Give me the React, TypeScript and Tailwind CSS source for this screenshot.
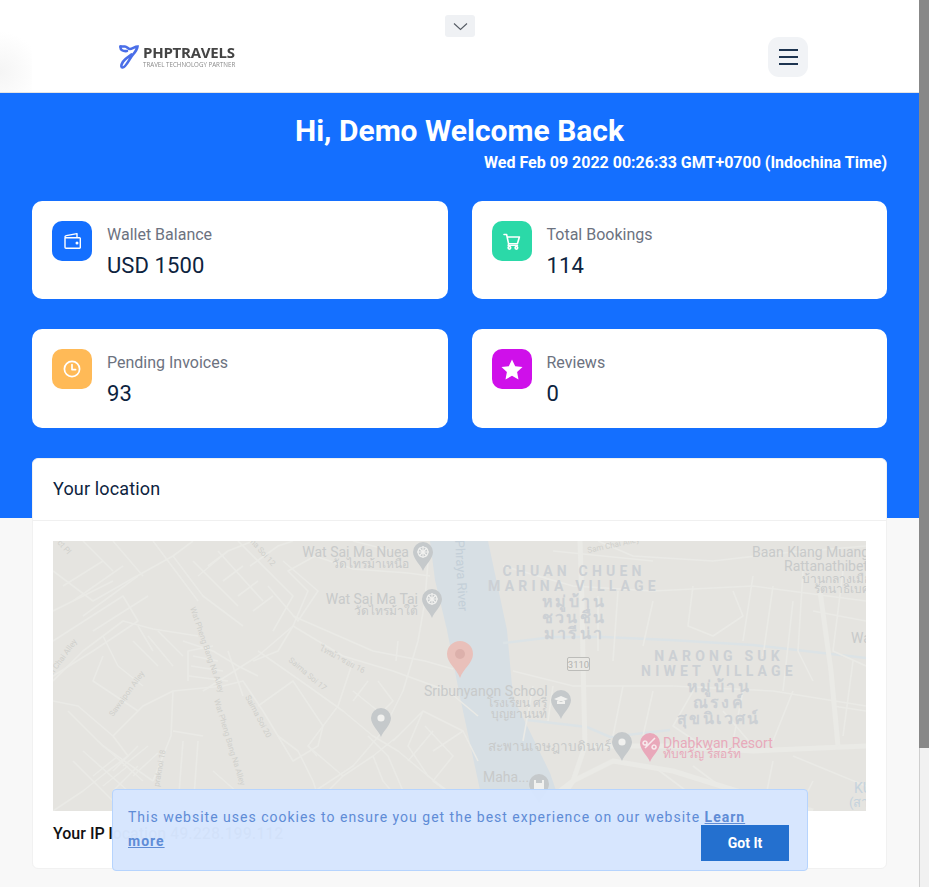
type Label = { t: string; x: number; y: number; s?: number; a?: "start" | "middle" | "end"; c?: string; w?: number; ls?: number; r?: number };

const roads: string[] = [
  "M0 30 L40 60 L75 40 L120 15 L140 0",
  "M0 70 L60 40 M0 100 L70 55 L85 80 L40 110 L0 135",
  "M10 45 L50 20 M20 60 L70 25 M30 75 L85 35 M40 90 L95 55",
  "M30 0 L60 30 M60 0 L90 35 M100 0 L130 40 L145 60",
  "M120 15 L150 55 L170 70 L190 85 M145 35 L175 10 L200 0",
  "M140 20 L185 65 M165 10 L210 60 M185 0 L240 55 L220 90",
  "M155 25 L175 10 M170 40 L190 25 M185 55 L205 40 M200 70 L220 55",
  "M197 25 L225 5 L240 0 M215 45 L245 80 L265 50 L230 20",
  "M340 10 L300 0 M262 15 L300 28 L355 32 L377 35 M262 15 L235 30 L255 50 L240 85 L205 115 L150 150",
  "M240 75 L320 110 L372 120 L400 128 M205 110 L255 145 L290 170 L320 195 L345 210 L375 235 L410 262",
  "M240 85 L290 115 L340 130 L395 150 L425 175",
  "M375 20 L372 60 L365 100 L350 150 L330 190 L300 225 L262 250 L230 270",
  "M345 100 L343 120 M300 120 L285 165 L270 185 L255 205 L264 215",
  "M0 140 L30 110 L50 95 L70 80 L100 88 L145 95 M50 95 L65 125 L90 145 M50 115 L40 140 L85 170",
  "M85 85 L100 110 M95 95 L120 125 M105 90 L130 115 M80 100 L105 125",
  "M0 160 L25 165 L60 195 L75 215 L55 230 L30 250 L0 270",
  "M15 170 L50 205 L100 240 M60 195 L90 165 L120 150 L170 145 L190 140 L210 170 L225 195 L245 210 L260 240 L270 270",
  "M120 150 L118 195 L110 215 L100 240 M120 190 L150 195 M130 100 L160 110 L185 125 L205 135",
  "M135 140 L135 110 L160 105 M175 110 L190 155 M200 120 L225 110 L240 85 M140 115 L165 120 M138 125 L170 130 M136 135 L175 140",
  "M205 165 L240 140 L270 185 L265 205 L240 220 L225 195",
  "M255 205 L290 235 L275 250 L290 270 M290 235 L320 215 L345 195 M320 215 L330 240 L355 270",
  "M300 150 L325 170 M300 160 L315 140 M325 140 L340 160 L330 170",
  "M315 195 L335 215 L350 250 M340 200 L370 170 L410 190 L425 220 M370 170 L355 205 L375 235",
  "M372 185 L400 215 L380 240 L410 262 M410 190 L380 210 M380 190 L355 220",
  "M545 0 L580 15 L660 20 L730 12 L813 5",
  "M500 10 L600 20 M450 25 L520 45 L600 50 L700 45 L813 60",
  "M545 55 L545 110 M565 50 L560 120 M600 60 L590 105 M640 45 L635 85 L660 95 L690 75 L680 50",
  "M700 35 L690 100 M720 45 L710 115 M740 60 L730 150 M750 30 L745 110 L760 140",
  "M460 130 L520 145 L620 145 L720 150 L813 165 M480 145 L470 200 M500 145 L495 180",
  "M570 145 L560 195 M600 150 L590 195 M640 150 L620 185 L650 205 M670 170 L700 205 M690 150 L680 200 M740 150 L720 200",
  "M800 120 L790 195 M813 170 L780 165 M760 70 L813 80 M790 30 L780 110 L813 125",
  "M600 225 L660 270 M640 225 L700 270 M720 220 L710 270 M740 215 L813 245 M760 240 L745 270",
  "M20 220 L60 260 M30 210 L75 250 M45 200 L90 240 M60 250 L85 225 M85 205 L60 230",
  "M70 225 L95 205 M80 235 L105 212 M40 235 L65 215 M50 245 L75 225",
  "M130 200 L125 265 M145 200 L140 270 M160 230 L200 265",
];

const mains: string[] = [
  "M527 0 L529 60 L530 120 L532 205 L520 240 L480 270",
  "M540 205 L620 205 L700 210 L813 205",
  "M767 50 L778 130 L785 205",
  "M500 270 L520 240 L560 220 L620 230 L700 255 L760 270",
];

const labels: Label[] = [
  { t: "Wat Sai Ma Nuea", x: 356, y: 16, s: 14, a: "end" },
  { t: "วัดไทรม้าเหนือ", x: 356, y: 27, s: 12, a: "end" },
  { t: "Wat Sai Ma Tai", x: 365, y: 63, s: 14, a: "end" },
  { t: "วัดไทรม้าใต้", x: 365, y: 74, s: 12, a: "end" },
  { t: "Sribunyanon School", x: 371, y: 155, s: 14 },
  { t: "โรงเรียน ศรี", x: 494, y: 166, s: 12, a: "end" },
  { t: "บุญยานนท์", x: 494, y: 177, s: 12, a: "end" },
  { t: "CHUAN CHUEN", x: 521, y: 35, s: 14, a: "middle", w: 700, ls: 4.2, c: "#ccd0d4" },
  { t: "MARINA VILLAGE", x: 521, y: 50, s: 14, a: "middle", w: 700, ls: 4.2, c: "#ccd0d4" },
  { t: "หมู่บ้าน", x: 521, y: 66, s: 16, a: "middle", w: 700, ls: 2.4, c: "#ccd0d4" },
  { t: "ชวนชื่น", x: 521, y: 82, s: 16, a: "middle", w: 700, ls: 2.4, c: "#ccd0d4" },
  { t: "มารีน่า", x: 521, y: 98, s: 16, a: "middle", w: 700, ls: 2.4, c: "#ccd0d4" },
  { t: "NARONG SUK", x: 666, y: 120, s: 14, a: "middle", w: 700, ls: 4.2, c: "#ccd0d4" },
  { t: "NIWET VILLAGE", x: 666, y: 135, s: 14, a: "middle", w: 700, ls: 4.2, c: "#ccd0d4" },
  { t: "หมู่บ้าน", x: 666, y: 151, s: 16, a: "middle", w: 700, ls: 2.4, c: "#ccd0d4" },
  { t: "ณรงค์", x: 666, y: 167, s: 16, a: "middle", w: 700, ls: 2.4, c: "#ccd0d4" },
  { t: "สุขนิเวศน์", x: 666, y: 183, s: 16, a: "middle", w: 700, ls: 2.4, c: "#ccd0d4" },
  { t: "Baan Klang Muang", x: 699, y: 16, s: 14 },
  { t: "Rattanathibet", x: 731, y: 30, s: 14 },
  { t: "บ้านกลางเมือง", x: 749, y: 42, s: 12 },
  { t: "รัตนาธิเบศร์", x: 761, y: 52, s: 12 },
  { t: "Wa", x: 798, y: 102, s: 14 },
  { t: "Dhabkwan Resort", x: 610, y: 207, s: 14, c: "#e8aabb" },
  { t: "ทับขวัญ รีสอร์ท", x: 610, y: 217, s: 12, c: "#e8aabb" },
  { t: "สะพานเจษฎาบดินทร์", x: 435, y: 210, s: 13.5 },
  { t: "Maha...", x: 430, y: 241, s: 14 },
  { t: "KU", x: 801, y: 252, s: 14, c: "#c5d3dd" },
  { t: "(สา", x: 796, y: 266, s: 13, c: "#c5d3dd" },
  { t: "Phraya River", x: 402, y: -1, s: 13, c: "#c4cfd8", r: 87 },
  { t: "Wat Pheng Bang Na Alley", x: 137, y: 67, s: 8, r: 71 },
  { t: "Wat Pheng Bang Na Alley", x: 161, y: 159, s: 8, r: 73 },
  { t: "Saima Soi 17", x: 235, y: 120, s: 8, r: 40 },
  { t: "ไทรม้า ซอย 16", x: 266, y: 109, s: 8, r: 28 },
  { t: "Sawaipon Alley", x: 60, y: 176, s: 8, r: -54 },
  { t: "Saima Soi 20", x: 192, y: 156, s: 8, r: 62 },
  { t: "n Chai Alley", x: 0, y: 134, s: 8, r: -54 },
  { t: "praknoi 18", x: 106, y: 246, s: 8, r: -80 },
  { t: "na Soi 12", x: 197, y: 1, s: 8, r: 48 },
  { t: "Sam Chai Alley", x: 535, y: 12, s: 8, r: -12 },
  { t: "ct Pl", x: 4, y: 2, s: 8, r: 48 },
];

const dropPin = (x: number, y: number, c: string, glyph: string) => (
  <g key={`${x}-${y}`}>
    <path d={`M${x} ${y + 18} C${x - 2} ${y + 12} ${x - 10} ${y + 6} ${x - 10} ${y - 1} A10 10 0 0 1 ${x + 10} ${y - 1} C${x + 10} ${y + 6} ${x + 2} ${y + 12} ${x} ${y + 18}Z`} fill={c} />
    {glyph === "dot" && <circle cx={x} cy={y - 1} r={3.6} fill="#f1f1ef" />}
    {glyph === "wheel" && (
      <g stroke="#f1f1ef" strokeWidth={1.2} fill="none">
        <circle cx={x} cy={y - 1} r={5} />
        <path d={`M${x - 6} ${y - 1}H${x + 6}M${x} ${y - 7}V${y + 5}M${x - 4} ${y - 5}L${x + 4} ${y + 3}M${x + 4} ${y - 5}L${x - 4} ${y + 3}`} />
      </g>
    )}
    {glyph === "cap" && <path d={`M${x - 7} ${y - 2}L${x} ${y - 5}L${x + 7} ${y - 2}L${x} ${y + 1}ZM${x - 4} ${y}V${y + 3}H${x + 4}V${y}Z`} fill="#f1f1ef" />}
    {glyph === "resort" && <path d={`M${x - 5} ${y + 4}L${x + 5} ${y - 6}M${x - 5} ${y - 3}a2 2 0 1 0 .1 0M${x + 4} ${y + 1}a2 2 0 1 0 .1 0`} stroke="#f7e9ec" strokeWidth={1.6} fill="none" />}
    {glyph === "temple" && <path d={`M${x - 5} ${y + 4}V${y - 5}H${x - 3}V${y - 2}H${x + 3}V${y - 5}H${x + 5}V${y + 4}Z`} fill="#f1f1ef" />}
  </g>
);

function MapArt() {
  return (
    <svg viewBox="0 0 813 270" className="block w-full h-[270px]" style={{ fontFamily: "Roboto, 'Noto Sans', 'DejaVu Sans', sans-serif" }}>
      <rect width="813" height="270" fill="#e5e4e0" />
      <path d="M377 0 L382 39 L394 89 L407 156 L427 249 L435 270 L510 270 L497 232 L460 156 L454 89 L435 0Z" fill="#d7dfe4" />
      <g fill="none" stroke="#dce3e6" strokeWidth={2.5}>
        <path d="M450 102 L500 96 L550 96 L617 99 L700 104 L813 117" />
        <path d="M474 179 L534 186 L557 196 L617 189" />
      </g>
      <g fill="none" stroke="#eaeae6" strokeWidth={5} strokeLinejoin="round">
        {mains.map((d) => <path key={d} d={d} />)}
      </g>
      <g fill="none" stroke="#eaeae6" strokeWidth={1.6} strokeLinejoin="round">
        {roads.map((d) => <path key={d} d={d} />)}
      </g>
      <g>
        <rect x="514.5" y="116.5" width="22" height="13" rx="1.5" fill="#e9e8e4" stroke="#bcbcb9" />
        <text x="525.5" y="127" textAnchor="middle" fontSize="9.5" fill="#b3b3b0">3110</text>
      </g>
      {labels.map((l) => (
        <text
          key={`${l.t}-${l.x}`}
          x={l.x}
          y={l.y}
          fontSize={l.s}
          fontWeight={l.w ?? 400}
          letterSpacing={l.ls}
          textAnchor={l.a ?? "start"}
          fill={l.c ?? (l.s === 8 ? "#d0d0cc" : "#c8caca")}
          transform={l.r ? `rotate(${l.r} ${l.x} ${l.y})` : undefined}
        >
          {l.t}
        </text>
      ))}
      {dropPin(370, 12, "#c5c9cb", "wheel")}
      {dropPin(379, 59, "#c5c9cb", "wheel")}
      {dropPin(328, 178, "#c5c9cb", "dot")}
      {dropPin(508, 160, "#c5c9cb", "cap")}
      {dropPin(569, 202, "#c5c9cb", "dot")}
      {dropPin(597, 203, "#e9a8ba", "resort")}
      {dropPin(486, 244, "#c5c9cb", "temple")}
      <path d="M407 137 C404 128 394 122 394 113 A13 13 0 0 1 420 113 C420 122 410 128 407 137Z" fill="#e9c0ba" />
      <circle cx="407" cy="113" r="5" fill="#dcb0ab" />
    </svg>
  );
}

function Stat({ label, value, color, children }: { label: string; value: string; color: string; children: React.ReactNode }) {
  return (
    <div className="flex gap-[15px] rounded-[10px] bg-white p-5">
      <div className={`flex h-10 w-10 shrink-0 items-center justify-center rounded-[10px] text-white ${color}`}>{children}</div>
      <div>
        <div className="text-[16px] leading-[28px] text-[#6c727f]">{label}</div>
        <div className="text-[22px] leading-[34px] tracking-[0.1px] text-[#0d233e]">{value}</div>
      </div>
    </div>
  );
}

export default function App() {
  return (
    <div className="flex h-[887px] w-[929px] overflow-hidden bg-white font-['Roboto',sans-serif]">
      <div className="relative h-full w-[919px] shrink-0 bg-[#f8f8f8]">
        <header className="relative flex h-[93px] items-center justify-between border-b border-[#e4e4e4] bg-white pl-[119px] pr-[111px] pt-[21px]">
          <div className="absolute bottom-0 left-0 h-[68px] w-[32px] bg-[radial-gradient(circle_at_0%_70%,#f5f5f5,#ffffff_70%)]" />
          <div className="absolute left-[445px] top-[15px] flex h-[22px] w-[30px] items-center justify-center rounded-[3px] bg-[#eff1f4] text-[#555b64]">
            <svg width="15" height="9" viewBox="0 0 15 9" fill="none" stroke="currentColor" strokeWidth="1.1"><path d="M1 1.5 L7.5 7.5 L14 1.5" /></svg>
          </div>
          <div className="relative flex items-center gap-[4px] blur-[0.4px]">
            <svg width="20" height="24" viewBox="0 0 20 24" fill="none" stroke="#4a6ee8" strokeWidth="2.6" strokeLinecap="round">
              <path d="M1.5 1.5 H6 C8 1.5 9 4 11 4 C13 4 16 1.5 18.5 1.5 C18 6 14 9 11.5 13 C9 17 6 23 3.5 22.5 C1 22 3 17 6 14.5 C8 12.5 11 11 12.5 9.5" />
              <path d="M1.5 1.5 C1 5 4 6.5 8 6" />
            </svg>
            <div className="flex flex-col">
              <span className="font-['Open_Sans',sans-serif] text-[15px] font-bold leading-[15px] tracking-[-0.25px] text-[#444444]">PHPTRAVELS</span>
              <span className="font-['Open_Sans',sans-serif] text-[6.2px] leading-[9px] text-[#8a8a8a]">TRAVEL TECHNOLOGY PARTNER</span>
            </div>
          </div>
          <button className="relative flex h-10 w-10 flex-col items-center justify-center gap-[5px] rounded-[11px] bg-[#f1f3f6]">
            <span className="h-[2px] w-[19px] bg-[#1d3450]" />
            <span className="h-[2px] w-[19px] bg-[#1d3450]" />
            <span className="h-[2px] w-[19px] bg-[#1d3450]" />
          </button>
        </header>

        <section className="flex h-[425px] flex-col bg-[#146fff] px-8 pt-[20px]">
          <h1 className="text-center text-[30px] font-bold leading-[36px] text-white">Hi, Demo Welcome Back</h1>
          <p className="mt-[2px] text-right text-[16px] font-bold leading-[24px] text-white">Wed Feb 09 2022 00:26:33 GMT+0700 (Indochina Time)</p>
          <div className="mt-[26px] grid grid-cols-2 grid-rows-[98px_99px] gap-x-6 gap-y-[30px]">
            <Stat label="Wallet Balance" value="USD 1500" color="bg-[#146fff]">
              <svg width="20" height="20" viewBox="0 0 20 20" fill="none" stroke="currentColor" strokeWidth="1.4" strokeLinejoin="round">
                <path d="M3 6.8 V16.2 A1 1 0 0 0 4 17.2 H17.5 A.8.8 0 0 0 18.3 16.4 V7.6 A.8.8 0 0 0 17.5 6.8 H4 A1 1 0 0 1 3 5.8 C3 5 3.5 4.8 4.2 4.6 L15 2.6 V6.8" />
                <circle cx="15" cy="12" r=".8" fill="currentColor" />
              </svg>
            </Stat>
            <Stat label="Total Bookings" value="114" color="bg-[#2bd9a8]">
              <svg width="18" height="17" viewBox="0 0 18 17" fill="none" stroke="currentColor" strokeWidth="1.6" strokeLinejoin="round" strokeLinecap="round">
                <path d="M1 1.5 H3.6 L5.6 10.8 H14.4 L16.4 4 H4.3" />
                <path d="M5.6 10.8 L5 12.4 H14.6" strokeWidth="1.2" />
                <circle cx="6.4" cy="14.8" r="1.3" />
                <circle cx="13.4" cy="14.8" r="1.3" />
              </svg>
            </Stat>
            <Stat label="Pending Invoices" value="93" color="bg-[#ffba57]">
              <svg width="18" height="18" viewBox="0 0 18 18" fill="none" stroke="currentColor" strokeWidth="1.7" strokeLinecap="round" strokeLinejoin="round">
                <circle cx="9" cy="9" r="7.6" />
                <path d="M9 4.6 V9.6 H12.6" />
              </svg>
            </Stat>
            <Stat label="Reviews" value="0" color="bg-[#cf10ea]">
              <svg width="22" height="21" viewBox="0 0 22 21" fill="currentColor">
                <path d="M11 .5 L14.2 7.2 L21.5 8.1 L16.1 13.1 L17.5 20.4 L11 16.8 L4.5 20.4 L5.9 13.1 L.5 8.1 L7.8 7.2Z" />
              </svg>
            </Stat>
          </div>
        </section>

        <div className="relative mx-8 -mt-[60px] h-[411px] rounded-[6px] border border-[#f1f1f1] bg-white">
          <div className="flex h-[62px] items-center border-b border-[#f0f0f0] px-5 pb-[2px] text-[18px] font-normal tracking-[0.15px] text-[#0d233e]">Your location</div>
          <div className="px-5 pt-5">
            <MapArt />
            <p className="mt-[12px] text-[16px] font-medium leading-[22px] text-[#111111]">Your IP location 49.228.199.112</p>
          </div>
        </div>

        <div className="absolute left-[112px] top-[789px] h-[82px] w-[696px] rounded-[4px] border border-[#b6d4fe] bg-[#d6e5fe]/[.98] pl-[15px] pr-[50px] pt-[15px]">
          <p className="text-[14px] leading-[24px] tracking-[1px] text-[#5f8cd6]">
            This website uses cookies to ensure you get the best experience on our website <a className="font-bold underline">Learn more</a>
          </p>
          <button className="absolute left-[588px] top-[35px] h-9 w-[88px] bg-[#2470cf] text-[14px] font-bold text-white">Got It</button>
        </div>
      </div>
      <div className="flex h-full w-[10px] flex-col border-l border-[#cfcfcf] bg-[#f1f1f1]">
        <div className="-ml-px h-[748px] w-[10px] bg-[#888888]" />
      </div>
    </div>
  );
}
